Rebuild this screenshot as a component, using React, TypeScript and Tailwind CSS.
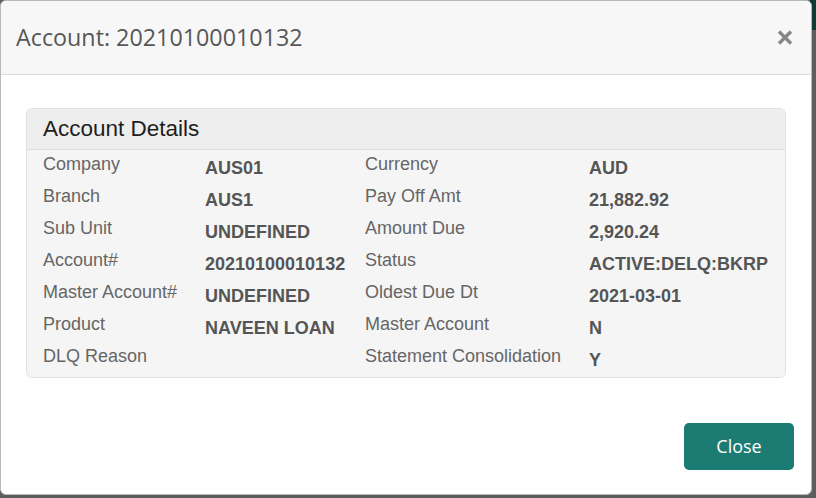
const rows: [string, string, string, string][] = [
  ["Company", "AUS01", "Currency", "AUD"],
  ["Branch", "AUS1", "Pay Off Amt", "21,882.92"],
  ["Sub Unit", "UNDEFINED", "Amount Due", "2,920.24"],
  ["Account#", "20210100010132", "Status", "ACTIVE:DELQ:BKRP"],
  ["Master Account#", "UNDEFINED", "Oldest Due Dt", "2021-03-01"],
  ["Product", "NAVEEN LOAN", "Master Account", "N"],
  ["DLQ Reason", "", "Statement Consolidation", "Y"],
];

function CloseIcon() {
  return (
    <svg width="16" height="15" viewBox="0 0 16 15">
      <path d="M2 1.5 L14 13.5 M14 1.5 L2 13.5" stroke="#878787" strokeWidth="3.4" strokeLinecap="butt" />
    </svg>
  );
}

export default function App() {
  return (
    <div className="relative h-[498px] w-[816px] overflow-hidden bg-[#5e5e5e]">
      <div className="absolute right-0 top-0 h-[30px] w-[6px] bg-[#0f3a34]" />
      <div className="relative flex h-[495px] w-[812px] flex-col overflow-hidden rounded-md border border-[#b9b9b9] bg-white">
        <header className="flex h-[74px] items-center justify-between border-b border-[#dcdcdc] bg-[#f7f7f7] pl-[15px] pr-[18px]">
          <h1 className="font-['Open_Sans',sans-serif] text-[23.3px] text-[#575757]">Account: 20210100010132</h1>
          <button className="mt-[-1px]">
            <CloseIcon />
          </button>
        </header>

        <div className="px-[25px] pt-[33px]">
          <section className="rounded-md border border-[#e2e2e2] bg-[#f5f5f5] font-['Liberation_Sans',Arial,sans-serif]">
            <div className="flex h-[41px] items-center border-b border-[#dddddd] bg-[#eeeeee] px-[16px] text-[22.5px] text-[#1e1e1e]">
              Account Details
            </div>
            <div className="px-[16px] pt-[3px]">
              {rows.map(([l1, v1, l2, v2]) => (
                <div key={l1} className="flex h-[32px] items-start text-[18px] leading-[22px]">
                  <div className="w-[162px] text-[#666666]">{l1}</div>
                  <div className="w-[160px] pt-[4px] font-bold text-[#555555]">{v1}</div>
                  <div className="w-[224px] text-[#666666]">{l2}</div>
                  <div className="pt-[4px] font-bold text-[#555555]">{v2}</div>
                </div>
              ))}
            </div>
          </section>
        </div>

        <div className="flex justify-end pr-[17px] pt-[45px]">
          <button className="h-[47px] w-[110px] rounded-[5px] bg-[#1c7c74] font-['Open_Sans',sans-serif] text-[18px] text-white">
            Close
          </button>
        </div>
      </div>
    </div>
  );
}
